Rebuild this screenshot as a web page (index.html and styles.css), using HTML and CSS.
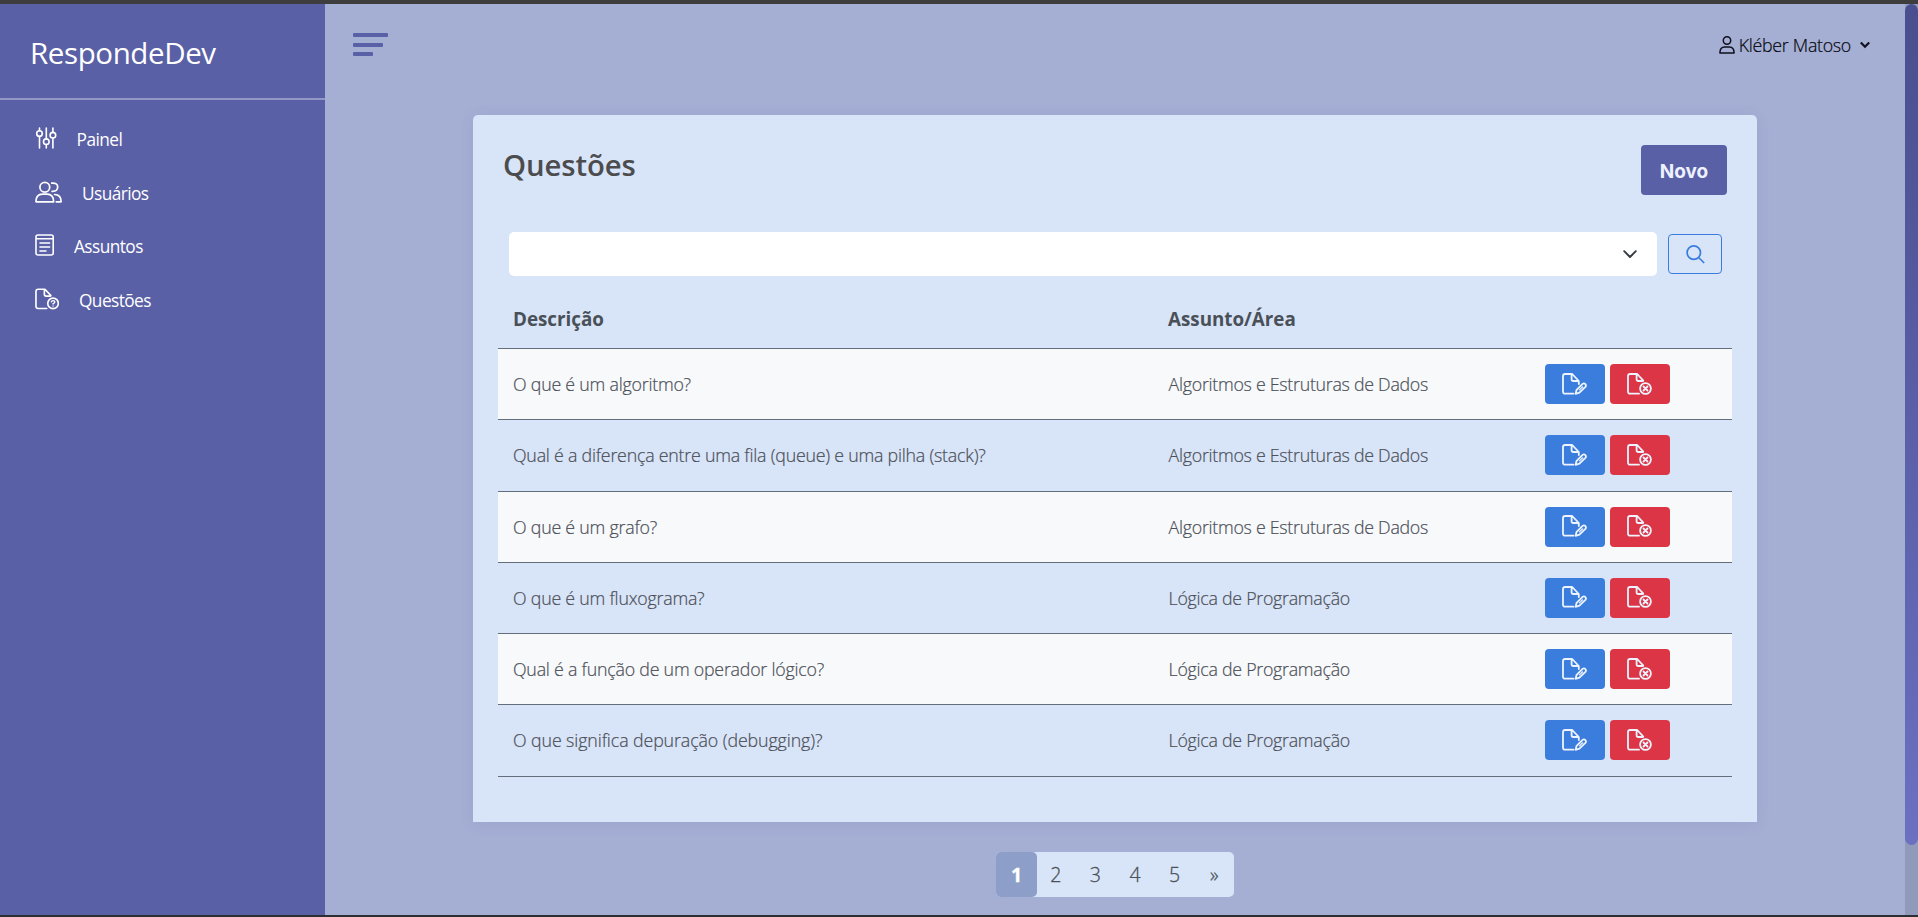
FILE: index.html
```
<!DOCTYPE html>
<html lang="pt-br">
<head>
<meta charset="utf-8">
<title>RespondeDev</title>
<link rel="stylesheet" href="styles.css">
</head>
<body>
<svg class="defs" width="0" height="0">
  <symbol id="file-edit" viewBox="0 0 25 22"><g fill="none" stroke="currentColor" stroke-width="1.8" stroke-linejoin="round" stroke-linecap="round"><path d="M11.5 20.7H3.2Q1 20.7 1 18.5V3.2Q1 1 3.2 1H10.2L16.8 8V11M9.6 1.3V6.2Q9.6 8 11.4 8H16.4"/><path d="M13.6 20.8L14.6 16.8L20.6 10.9Q22 9.8 23.3 11Q24.6 12.4 23.4 13.8L17.4 19.7Z"/><path d="M17.4 16.9L20.6 13.8" stroke-width="1.2"/></g></symbol>
  <symbol id="file-delete" viewBox="0 0 25 22"><g fill="none" stroke="currentColor" stroke-width="1.8" stroke-linejoin="round" stroke-linecap="round"><path d="M12 20.7H3.2Q1 20.7 1 18.5V3.2Q1 1 3.2 1H10.2L16.3 7.6M9.6 1.3V6.2Q9.6 8 11.4 8H16"/><circle cx="18.5" cy="15.5" r="5.4"/><path d="M16.5 13.5L20.5 17.5M20.5 13.5L16.5 17.5"/></g></symbol>
</svg>
<div class="window">
  <aside class="sidebar">
    <div class="brand"><span>RespondeDev</span></div>
    <nav class="menu">
      <a class="item"><svg class="i-panel" width="21" height="22" viewBox="0 0 21 22"><g fill="none" stroke="currentColor" stroke-width="1.6" stroke-linecap="round"><path d="M3.5 1V3.6M3.5 9.6V21M10.3 1V11.8M10.3 17.6V21M16.9 1V5.4M16.9 11.2V21"/><circle cx="3.5" cy="6.6" r="2.8"/><circle cx="10.3" cy="14.7" r="2.8"/><circle cx="16.9" cy="8.2" r="2.8"/></g></svg><span>Painel</span></a>
      <a class="item"><svg width="27" height="22" viewBox="0 0 27 22"><g fill="none" stroke="currentColor" stroke-width="1.7" stroke-linecap="round" stroke-linejoin="round"><circle cx="9.8" cy="6.2" r="4.9"/><path d="M1 20.8Q.8 13.2 7.5 13.2H12Q18.7 13.2 18.6 20.8ZM16.7 2.2Q22.7 1.6 22.7 6.1Q22.7 10.6 17 10.3M19.6 13.5Q26.3 13.8 26.1 20.8H21.3"/></g></svg><span>Usuários</span></a>
      <a class="item"><svg width="19" height="22" viewBox="0 0 19 22"><g fill="none" stroke="currentColor" stroke-width="1.6" stroke-linecap="round"><rect x="1" y="1" width="17.2" height="20" rx="2"/><path d="M1.4 4.7H18M5 9H14.6M5 13H14.6M5 17H11"/></g></svg><span>Assuntos</span></a>
      <a class="item"><svg width="24" height="22" viewBox="0 0 24.6 22"><g fill="none" stroke="currentColor" stroke-width="1.7" stroke-linejoin="round" stroke-linecap="round"><path d="M12 20.7H3.2Q1 20.7 1 18.5V3.2Q1 1 3.2 1H10.2L16.3 7.6M9.6 1.3V6.2Q9.6 8 11.4 8H16"/><circle cx="18.5" cy="15.5" r="5.4"/><path d="M16.7 14Q17 12.7 18.5 12.7Q20.2 12.7 20.3 14Q20.3 15 18.5 15.8V16.2M18.5 18.2V18.3" stroke-width="1.4"/></g></svg><span>Questões</span></a>
    </nav>
  </aside>
  <main class="content">
    <header class="topbar">
      <svg class="burger" width="35" height="23" viewBox="0 0 35 23"><rect width="35" height="4" rx="1"/><rect y="10" width="30" height="4" rx="1"/><rect y="19" width="20" height="4" rx="1"/></svg>
      <div class="user"><svg width="16" height="18" viewBox="0 0 16 18"><g fill="none" stroke="#0c0f1c" stroke-width="1.5"><circle cx="8" cy="4.5" r="3.7"/><path d="M.9 17.1Q.9 11 5.7 11H10.3Q15.1 11 15.1 17.1Z" stroke-linejoin="round"/></g></svg><span class="name">Kléber Matoso</span><svg width="12" height="8" viewBox="0 0 12 8"><path d="M1.8 1.5L6 5.8L10.2 1.5" fill="none" stroke="#10121c" stroke-width="2.2"/></svg></div>
    </header>
    <section class="card">
      <div class="card-head"><h1>Questões</h1><button class="new">Novo</button></div>
      <div class="search">
        <div class="select"><svg width="14" height="9" viewBox="0 0 14 9"><path d="M1.2 1.2L7 7L12.8 1.2" fill="none" stroke="#343a40" stroke-width="1.9" stroke-linecap="round" stroke-linejoin="round"/></svg></div>
        <button class="find"><svg width="19" height="19" viewBox="0 0 19 19"><g fill="none" stroke="currentColor" stroke-width="1.7"><circle cx="7.8" cy="7.6" r="6.7"/><path d="M12.6 12.5L18.2 18"/></g></svg></button>
      </div>
      <div class="table">
        <div class="row head"><span>Descrição</span><span>Assunto/Área</span></div>
        <div class="row odd"><span>O que é um algoritmo?</span><span class="sub">Algoritmos e Estruturas de Dados</span><div class="actions"><button class="edit"><svg><use href="#file-edit"/></svg></button><button class="del"><svg><use href="#file-delete"/></svg></button></div></div>
        <div class="row"><span>Qual é a diferença entre uma fila (queue) e uma pilha (stack)?</span><span class="sub">Algoritmos e Estruturas de Dados</span><div class="actions"><button class="edit"><svg><use href="#file-edit"/></svg></button><button class="del"><svg><use href="#file-delete"/></svg></button></div></div>
        <div class="row odd"><span>O que é um grafo?</span><span class="sub">Algoritmos e Estruturas de Dados</span><div class="actions"><button class="edit"><svg><use href="#file-edit"/></svg></button><button class="del"><svg><use href="#file-delete"/></svg></button></div></div>
        <div class="row"><span>O que é um fluxograma?</span><span class="sub">Lógica de Programação</span><div class="actions"><button class="edit"><svg><use href="#file-edit"/></svg></button><button class="del"><svg><use href="#file-delete"/></svg></button></div></div>
        <div class="row odd"><span>Qual é a função de um operador lógico?</span><span class="sub">Lógica de Programação</span><div class="actions"><button class="edit"><svg><use href="#file-edit"/></svg></button><button class="del"><svg><use href="#file-delete"/></svg></button></div></div>
        <div class="row"><span class="wide">O que significa depuração (debugging)?</span><span class="sub">Lógica de Programação</span><div class="actions"><button class="edit"><svg><use href="#file-edit"/></svg></button><button class="del"><svg><use href="#file-delete"/></svg></button></div></div>
      </div>
    </section>
    <nav class="pages"><b>1</b><a>2</a><a>3</a><a>4</a><a>5</a><a>»</a></nav>
  </main>
  <div class="scroll"><div class="thumb"></div></div>
</div>
</body>
</html>
```
FILE: styles.css
```
* { box-sizing: border-box; }
body { margin: 0; height: 917px; overflow: hidden; font-family: "Open Sans", "Noto Sans", sans-serif; }
h1, button { margin: 0; padding: 0; border: 0; }
svg { display: block; flex: none; }
.defs { position: absolute; }
span { white-space: nowrap; }
.window { display: flex; height: 917px; border-top: 4px solid #3d3d3d; border-bottom: 2px solid #2b2e33; background: #a5aed3; }

.sidebar { width: 325px; background: #5a60a5; color: #fff; flex: none; }
.brand { height: 96px; border-bottom: 2px solid #9297c6; padding: 29px 0 0 30px; font-size: 29.5px; line-height: 40px; letter-spacing: -0.4px; }
.menu { padding: 11px 0 0 35px; }
.item { display: flex; align-items: center; height: 53.8px; font-size: 17.3px; letter-spacing: -0.57px; }
.item span { margin-left: 20px; padding-top: 3px; }
.item .i-panel { margin-left: 0.6px; }

.content { flex: 1; display: flex; flex-direction: column; align-items: stretch; }
.topbar { height: 111px; padding: 29px 34px 0 28px; display: flex; justify-content: space-between; align-items: flex-start; }
.burger { fill: #5a60a5; }
.user { display: flex; align-items: center; height: 24px; font-size: 17.8px; font-weight: 300; color: #05070f; -webkit-text-stroke: 0.2px; }
.name { margin: 0 8px 0 4px; letter-spacing: -0.28px; }

.card { width: 1284px; height: 707px; margin-left: 148px; padding: 30px 25px 0; background: #d8e4f7; border-radius: 5px 5px 0 0; box-shadow: 0 2px 15px rgba(70, 80, 140, .09); color: #4b4f58; }
.card-head { display: flex; justify-content: space-between; padding: 0 5px; height: 87px; }
h1 { font-size: 29.3px; line-height: 40px; font-weight: 600; letter-spacing: -0.1px; color: #4c4c4f; }
.new { width: 86px; height: 50px; border-radius: 4px; background: #5a60a5; color: #eef2ff; font: 700 19px/50px Inter, sans-serif; padding-top: 2px; }
.search { display: flex; align-items: center; gap: 11px; padding-left: 11px; }
.select { width: 1148px; height: 44px; border-radius: 5px; background: #fff; display: flex; align-items: center; justify-content: flex-end; padding-right: 20px; }
.find { width: 54px; height: 40px; border: 1px solid #3b7ddd; border-radius: 4px; background: none; color: #3b7ddd; display: grid; place-items: center; }
.table { margin-top: 14px; }
.row { display: grid; grid-template-columns: 655px 376px 1fr; align-items: center; height: 71.25px; padding-left: 16px; border-bottom: 1px solid #656e7c; font-size: 17.8px; font-weight: 300; letter-spacing: -0.22px; }
.row > span { margin-left: -1px; -webkit-text-stroke: 0.2px; }
.row > .sub { margin-left: -0.4px; letter-spacing: -0.27px; }
.row > .wide { letter-spacing: -0.1px; }
.row.head { height: 59px; font-size: 18.8px; font-weight: 700; letter-spacing: 0; padding-bottom: 1px; color: #495057; }
.row.head > span { -webkit-text-stroke: 0; }
.odd { background: #f8f9fb; }
.actions { display: flex; gap: 5px; }
.actions button { width: 60px; height: 40px; border-radius: 4px; color: #eef4ff; display: grid; place-items: center; padding: 0 1px 1px 0; }
.actions svg { width: 25px; height: 22px; }
.edit { background: #3b7ddd; }
.del { background: #dc3545; }

.pages { display: flex; width: 238px; height: 45px; margin: 30px 0 0 671px; background: #d8e4f7; border-radius: 5px; color: #495057; font-size: 19.5px; font-weight: 300; line-height: 46px; text-align: center; -webkit-text-stroke: 0.3px; }
.pages b { width: 41px; margin-right: -1px; border-radius: 5px; background: #8d9fc8; color: #fff; font-weight: 700; }
.pages a { width: 39.6px; }
.scroll { width: 13px; background: #929abb; flex: none; }
.thumb { height: 841px; border-radius: 7px; background: linear-gradient(#494e8e, #6b70c1); }
```
